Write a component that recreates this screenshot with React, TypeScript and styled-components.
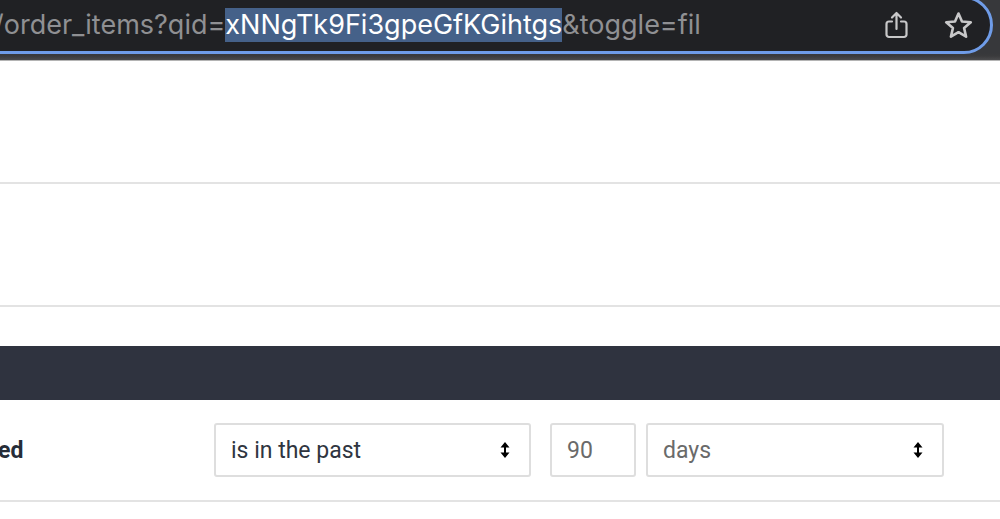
import React from "react";
import styled, { createGlobalStyle } from "styled-components";

const GlobalStyle = createGlobalStyle`
  html, body {
    margin: 0;
    padding: 0;
    background: #ffffff;
  }
`;

const Page = styled.div`
  display: flex;
  flex-direction: column;
  height: 519px;
  overflow: hidden;
  width: 1000px;
`;

const BrowserBar = styled.header`
  background: linear-gradient(#37383b 0, #37383b 53px, #3a3a3c 56px, #4b4b4d 60px);
  border-bottom: 1px solid #b4b4b4;
  box-sizing: border-box;
  flex: none;
  height: 61px;
  overflow: hidden;
  width: 1000px;
`;

const UrlPill = styled.div`
  align-items: center;
  background: #202124;
  border: 3px solid #6f9ce8;
  border-radius: 0 30px 30px 0;
  box-sizing: border-box;
  display: flex;
  height: 58px;
  margin-left: -30px;
  margin-top: -4px;
  width: 1023px;
`;

const UrlText = styled.div`
  color: #8f9093;
  flex: 1;
  font-family: Inter, "Liberation Sans", sans-serif;
  font-size: 27px;
  margin-left: 21px;
  white-space: nowrap;
`;

const Selected = styled.span`
  background: #456189;
  color: #ffffff;
  display: inline-block;
  line-height: 34px;
`;

const BarIcons = styled.div`
  align-items: center;
  display: flex;
  gap: 36px;
  margin-right: 17px;
`;

const Row = styled.div`
  background: #ffffff;
  border-bottom: 2px solid #e3e3e3;
  box-sizing: border-box;
  flex: none;
  height: 123px;
`;

const DarkBand = styled.div`
  background: #2f333f;
  flex: none;
  height: 54px;
  margin-top: 39px;
`;

const FilterRow = styled.div`
  align-items: center;
  border-bottom: 2px solid #e3e3e3;
  box-sizing: border-box;
  display: flex;
  flex: none;
  font-family: Roboto, "Liberation Sans", sans-serif;
  font-size: 23px;
  height: 102px;
`;

const FieldName = styled.div`
  color: #262d38;
  font-weight: 700;
  margin-left: -2px;
  width: 216px;
`;

const Field = styled.div<{ $width: number; $muted?: boolean; $gap?: number }>`
  align-items: center;
  background: #ffffff;
  border: 2px solid #dedede;
  border-radius: 3px;
  box-sizing: border-box;
  color: ${p => (p.$muted ? "#6a6a6a" : "#2f3540")};
  display: flex;
  height: 54px;
  justify-content: space-between;
  margin-right: ${p => p.$gap ?? 0}px;
  padding: 0 19px 0 15px;
  width: ${p => p.$width}px;
`;

const ShareIcon = () => (
  <svg width="23" height="28" viewBox="0 0 23 28" fill="none" stroke="#c8c8c9" strokeWidth="2.2" strokeLinecap="round" strokeLinejoin="round">
    <path d="M7 10.5H4a2.5 2.5 0 0 0-2.5 2.5v10.5A2.5 2.5 0 0 0 4 26h15a2.5 2.5 0 0 0 2.5-2.5V13a2.5 2.5 0 0 0-2.5-2.5h-3" />
    <path d="M11.5 18V2M7 6.5 11.5 2 16 6.5" />
  </svg>
);

const StarIcon = () => (
  <svg width="29" height="28" viewBox="0 0 29 28" fill="none" stroke="#c8c8c9" strokeWidth="2.6" strokeLinejoin="round">
    <path d="M14.5 2.5l3.5 8 8.8.8-6.7 5.8 2 8.6-7.6-4.5-7.6 4.5 2-8.6-6.7-5.8 8.8-.8z" />
  </svg>
);

const UpDownArrows = () => (
  <svg width="10" height="16" viewBox="0 0 10 16" fill="#000000">
    <path d="M5 0l4.5 5.5H6v5h3.5L5 16 .5 10.5H4v-5H.5z" />
  </svg>
);

function App() {
  return (
    <Page>
      <GlobalStyle />
      <BrowserBar>
        <UrlPill>
          <UrlText>
            /order_items?qid=<Selected>xNNgTk9Fi3gpeGfKGihtgs</Selected>&amp;toggle=fil
          </UrlText>
          <BarIcons>
            <ShareIcon />
            <StarIcon />
          </BarIcons>
        </UrlPill>
      </BrowserBar>
      <Row />
      <Row />
      <DarkBand />
      <FilterRow>
        <FieldName>ed</FieldName>
        <Field $width={317} $gap={19}>
          is in the past
          <UpDownArrows />
        </Field>
        <Field $width={86} $muted $gap={10}>
          90
        </Field>
        <Field $width={298} $muted>
          days
          <UpDownArrows />
        </Field>
      </FilterRow>
    </Page>
  );
}

export default App;
